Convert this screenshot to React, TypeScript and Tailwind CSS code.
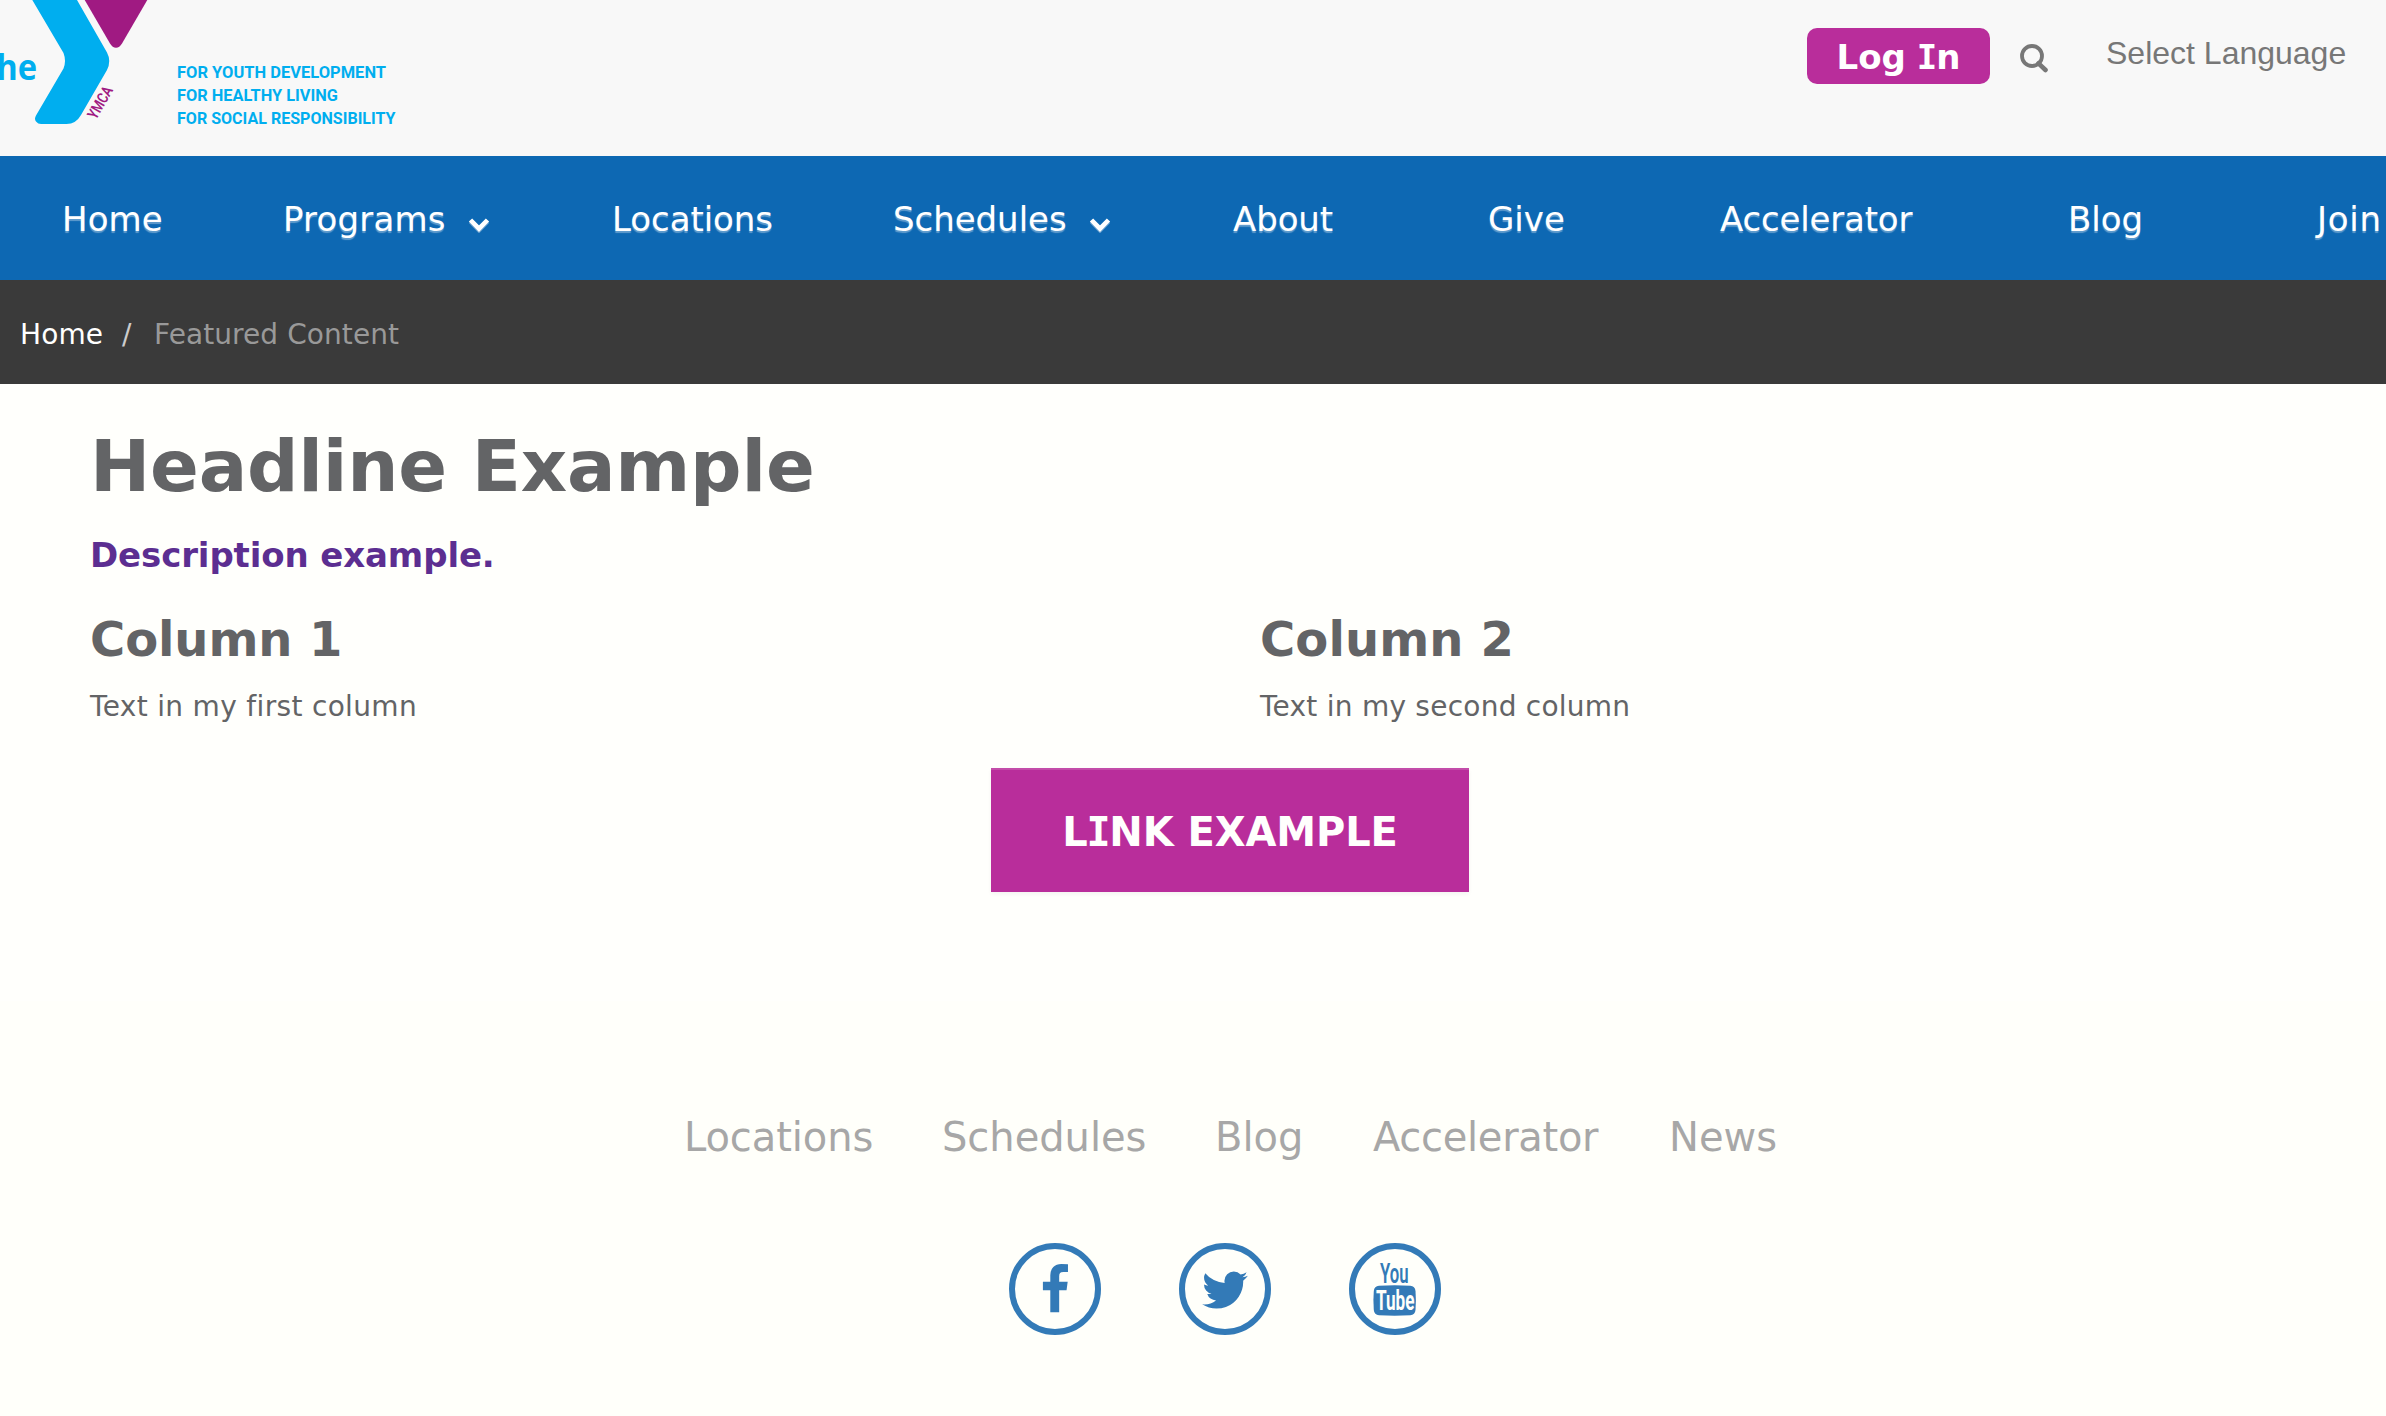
import type { ReactNode } from "react";

const navItems = [
  { label: "Home", cell: "w-[221px]", track: "tracking-[0.1px]", menu: false },
  { label: "Programs", cell: "w-[329px]", track: "tracking-[0.2px]", menu: true },
  { label: "Locations", cell: "w-[281px]", track: "tracking-[-0.07px]", menu: false },
  { label: "Schedules", cell: "w-[340px]", track: "tracking-[-0.04px]", menu: true },
  { label: "About", cell: "w-[255px]", track: "tracking-[-0.1px]", menu: false },
  { label: "Give", cell: "w-[232px]", track: "tracking-[0px]", menu: false },
  { label: "Accelerator", cell: "w-[348px]", track: "tracking-[-0.18px]", menu: false },
  { label: "Blog", cell: "w-[249px]", track: "tracking-[0px]", menu: false },
  { label: "Join", cell: "w-[72px]", track: "tracking-[0.7px]", menu: false },
];

const footerItems = [
  { label: "Locations", cell: "w-[258px]", track: "tracking-[-0.1px]" },
  { label: "Schedules", cell: "w-[273px]", track: "tracking-[-0.03px]" },
  { label: "Blog", cell: "w-[158px]", track: "tracking-[0px]" },
  { label: "Accelerator", cell: "w-[296px]", track: "tracking-[-0.3px]" },
  { label: "News", cell: "w-[110px]", track: "tracking-[0px]" },
];

function Logo() {
  return (
    <svg width="420" height="140" viewBox="0 0 420 140" className="block shrink-0">
      <path
        fill="#00aeef"
        d="M32.3 0H77L107 52.5Q111.500 61 107 70L81 115Q76 124 66.500 124H41Q38 124 36 121.500Q34 119 36 115.500L63.500 68.500Q66.500 61 63.500 53Z"
      />
      <path fill="#a01a82" d="M84.700 0H147.300L122 43.500Q119.500 47.700 116 47.700Q112.500 47.700 110 43.500Z" />
      <text x="-18" y="79.500" fontSize="36" fontWeight="700" fill="#00aeef" className="font-['Open_Sans',sans-serif]" textLength="55" lengthAdjust="spacingAndGlyphs">
        the
      </text>
      <text
        transform="translate(96 120.300) rotate(-60)"
        fontSize="15.500"
        fontWeight="600"
        fill="#a01a82"
        className="font-['Roboto',sans-serif]"
        textLength="35"
        lengthAdjust="spacingAndGlyphs"
      >
        YMCA
      </text>
      <g fontSize="17" fontWeight="700" fill="#00aeef" className="font-['Roboto',sans-serif]">
        <text x="177" y="78" textLength="209" lengthAdjust="spacingAndGlyphs">FOR YOUTH DEVELOPMENT</text>
        <text x="177" y="100.800" textLength="161" lengthAdjust="spacingAndGlyphs">FOR HEALTHY LIVING</text>
        <text x="177" y="123.500" textLength="218.500" lengthAdjust="spacingAndGlyphs">FOR SOCIAL RESPONSIBILITY</text>
      </g>
    </svg>
  );
}

function SearchIcon() {
  return (
    <svg width="28" height="29" viewBox="0 0 28 29" fill="none" stroke="#777777" className="block shrink-0">
      <circle cx="12" cy="12" r="10" strokeWidth="3.800" />
      <path d="M18.500 19.300L25.500 26" strokeWidth="4.600" strokeLinecap="round" />
    </svg>
  );
}

function Caret() {
  return (
    <svg width="22" height="15" viewBox="0 0 22 15" fill="none" className="mt-[11px] ml-[22px] block shrink-0">
      <path d="M2.500 2L11 10.700L19.500 2" stroke="#ffffff" strokeOpacity="0.35" strokeWidth="4.600" transform="translate(0 1.500)" />
      <path d="M2.500 2L11 10.700L19.500 2" stroke="#ffffff" strokeWidth="4.600" />
    </svg>
  );
}

/* Capital I with slab serifs, set inside the proportional bold face. */
function SlabI() {
  return <span className="mx-[-0.028em] font-['DejaVu_Sans_Mono',monospace]">I</span>;
}

function Social({ children }: { children: ReactNode }) {
  return (
    <a className="flex size-[92px] items-center justify-center rounded-full border-[6px] border-[#337ab7] text-[#337ab7]">
      {children}
    </a>
  );
}

export default function App() {
  return (
    <div className="min-h-[1416px] w-[2386px] overflow-hidden bg-[#fffffc] font-['DejaVu_Sans',sans-serif] text-[#636466]">
      <header className="flex h-[156px] items-start bg-[#f8f8f8]">
        <Logo />
        <a className="mt-7 ml-auto flex h-14 w-[183px] items-center justify-center rounded-[10px] bg-[#b92d9b] pt-[3px] text-[34px] font-bold whitespace-nowrap text-white">
          <span>
            Log <SlabI />n
          </span>
        </a>
        <div className="mt-11 ml-[30px]">
          <SearchIcon />
        </div>
        <span className="mt-[33px] mr-[38px] ml-[58px] w-[242px] font-['Liberation_Sans',sans-serif] text-[32px] leading-10 whitespace-nowrap text-[#777777]">
          Select Language
        </span>
      </header>

      <nav className="flex h-[124px] items-center bg-[#0d68b3] pt-[3px] pl-[62px] text-[34px] text-white [text-shadow:0_2px_1px_rgba(255,255,255,0.35)]">
        {navItems.map((item) => (
          <div key={item.label} className={`flex shrink-0 items-center ${item.cell}`}>
            <span className={`whitespace-nowrap ${item.track}`}>{item.label}</span>
            {item.menu && <Caret />}
          </div>
        ))}
      </nav>

      <div className="flex h-[104px] items-center bg-[#3a3a3a] pt-[6px] pl-[20px] text-[28px] whitespace-nowrap">
        <span className="w-[102px] tracking-[0.1px] text-white">Home</span>
        <span className="w-[32px] text-[#cccccc]">/</span>
        <span className="tracking-[0.08px] text-[#999999]">Featured Content</span>
      </div>

      <main className="flex h-[617px] flex-col pt-[42px] pl-[90px]">
        <h1 className="text-[72px] leading-[80px] font-bold tracking-[-0.22px]">Headline Example</h1>
        <p className="mt-[29px] text-[34px] leading-10 font-bold tracking-[-0.12px] text-[#5c2e91]">Description example.</p>
        <div className="mt-9 flex">
          <section className="w-[1170px]">
            <h2 className="text-[48px] leading-[56px] font-bold tracking-[-0.1px]">Column 1</h2>
            <p className="mt-[20px] text-[28px] leading-10 tracking-[0.33px]">Text in my first column</p>
          </section>
          <section>
            <h2 className="text-[48px] leading-[56px] font-bold tracking-[0.1px]">Column 2</h2>
            <p className="mt-[20px] text-[28px] leading-10 tracking-[0.24px]">Text in my second column</p>
          </section>
        </div>
        <a className="mt-[41px] ml-[901px] flex h-[124px] w-[478px] shrink-0 items-center justify-center bg-[#b92d9b] pt-1 text-[40px] font-bold tracking-[-0.1px] text-[#fffffd] shadow-[inset_0_2px_0_rgba(255,255,255,0.15),0_2px_4px_rgba(0,0,0,0.05)]">
          <span>
            L<SlabI />NK EXAMPLE
          </span>
        </a>
      </main>

      <footer className="h-[415px] bg-[#fffffa] pt-[108px]">
        <div className="flex pl-[684px] text-[40px] leading-[56px] whitespace-nowrap text-[#a7a7a7]">
          {footerItems.map((item) => (
            <span key={item.label} className={`${item.cell} ${item.track}`}>
              {item.label}
            </span>
          ))}
        </div>
        <div className="mt-[78px] flex gap-[78px] pl-[1009px]">
          <Social>
            <svg width="52" height="52" viewBox="0 0 1792 1792" fill="currentColor" className="mt-px">
              <path d="M1343 12v264h-157q-86 0-116 36t-30 108v189h293l-39 296h-254v759h-306v-759h-255v-296h255v-218q0-186 104-288.500t277-102.500q147 0 228 12z" />
            </svg>
          </Social>
          <Social>
            <svg width="52" height="52" viewBox="0 0 1792 1792" fill="currentColor" className="mt-px">
              <path d="M1684 408q-67 98-162 167 1 14 1 42 0 130-38 259.500t-115.500 248.500-184.500 210.500-258 146-323 54.500q-271 0-496-145 35 4 78 4 225 0 401-138-105-2-188-64.500t-114-159.500q33 5 61 5 43 0 85-11-112-23-185.500-111.500t-73.500-205.500v-4q68 38 146 41-66-44-105-115t-39-154q0-88 44-163 121 149 294.500 238.500t371.500 99.500q-8-38-8-74 0-134 94.500-228.500t228.500-94.500q140 0 236 102 109-21 205-78-37 115-142 178 93-10 186-50z" />
            </svg>
          </Social>
          <Social>
            <svg width="52" height="53" viewBox="0 0 52 53" fill="currentColor" className="mt-px overflow-visible font-['Roboto',sans-serif]">
              <path d="M10 22.700Q25.600 21.800 41.300 22.700Q46 23 46.500 28Q47.300 37 46.500 47Q46 52 41.300 52.300Q25.600 53.200 10 52.300Q5.300 52 4.800 47Q4 37 4.800 28Q5.300 23 10 22.700Z" />
              <text x="11" y="19.700" fontSize="27" fontWeight="600" textLength="28.500" lengthAdjust="spacingAndGlyphs">You</text>
              <text x="7" y="47" fontSize="27" fontWeight="700" fill="#fffffa" textLength="38.500" lengthAdjust="spacingAndGlyphs">Tube</text>
            </svg>
          </Social>
        </div>
      </footer>
    </div>
  );
}
